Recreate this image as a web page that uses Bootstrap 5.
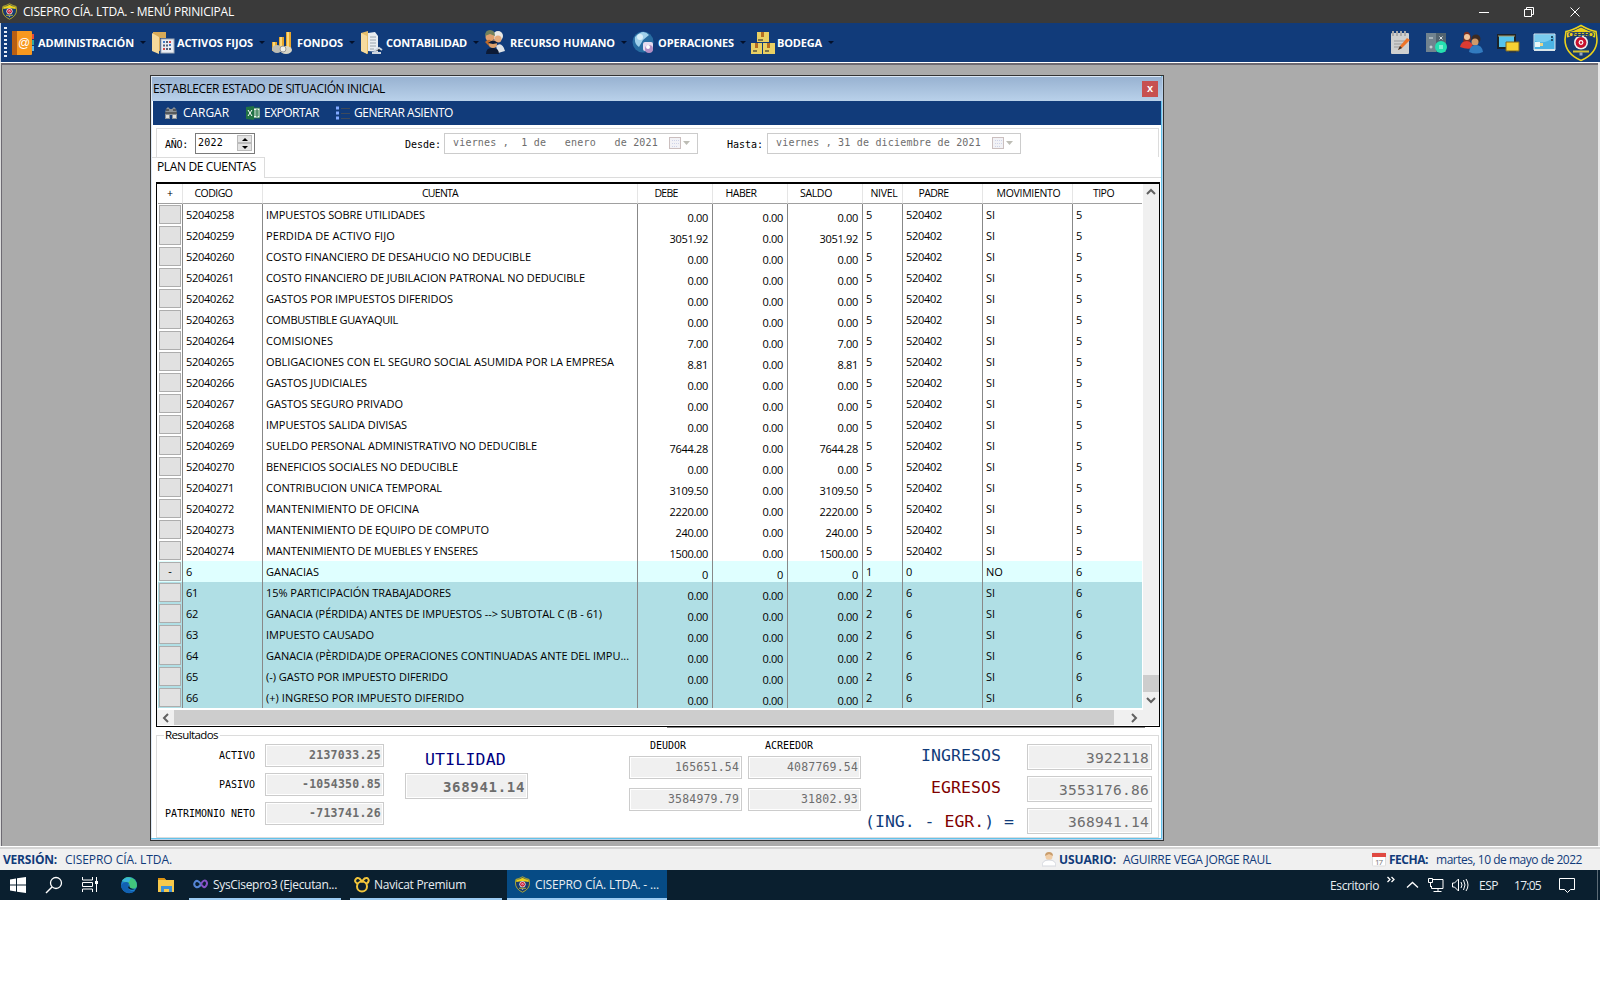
<!DOCTYPE html>
<html lang="es">
<head>
<meta charset="utf-8">
<title>CISEPRO CÍA. LTDA.</title>
<link rel="stylesheet" href="https://cdn.jsdelivr.net/npm/bootstrap@5.3.0/dist/css/bootstrap.min.css">
<style>
body{width:1600px;height:988px;background:#fff;color:#000;font:12px/16px "Open Sans","Noto Sans",sans-serif;overflow:hidden;white-space:nowrap}
svg{display:block;flex:none}
.fit{display:inline-block;white-space:pre}
.mono{font-family:"DejaVu Sans Mono",monospace}
.topbar{height:23px;background:#3a3a3a;color:#fff;padding-left:2px}
.topbar .wtitle{margin-left:6px}
.menubar{height:39px;background:#113b7a;color:#fff;font-weight:700;font-size:11px;padding-left:3px;border-left:1px solid #cdd6e4}
.grip{width:3px;height:31px;margin-right:5px;background:repeating-linear-gradient(#e8edf5 0 2px,transparent 2px 4px)}
.mitem .ico{width:26px}
.mitem .caret{width:0;height:0;border:3px solid transparent;border-top-color:#03102b;border-bottom:0;margin-left:6px}
.tools{margin-left:auto;height:39px}
.mdi{height:784px;background:#ababab;border-top:1px solid #fff;border-left:1px solid #ddd;border-right:2px solid #e6e6e6;box-shadow:inset 1px 2px 0 #6d6a72;padding:12px 0 0 149px}
.child{width:1014px;height:766px;border:1px solid #333;padding:1px 0 2px 1px;background:#fff;box-shadow:inset -1px -1px 0 #b9d1ea,inset -2px -2px 0 #63c3ea,inset 1px 1px 0 #dce8f6}
.ctitle{height:24px;width:1010px;background:linear-gradient(#98b2d1,#b9d1ea);padding-left:1px}
.closex{width:16px;height:16px;background:#c75050;color:#fff;font:bold 11px/14px "Liberation Sans",sans-serif;text-align:center;margin-left:auto;margin-right:4px}
.ctools{height:24px;width:1008px;margin-left:1px;background:#113b7a;color:#fff;padding-left:11px}
.filters{height:29px;margin:3px 4px 0 4px;border:1px solid #dcdcdc;border-bottom:0;padding-left:8px;font-size:10px;width:1003px}
.filters > .fit{padding-top:3px}
.tabs{height:21px;width:1009px}
.tabs .ctab{width:113px;border-top:1px solid #dcdcdc;border-right:1px solid #dcdcdc;padding:1px 0 0 5px}
.tabs .rest{border-bottom:1px solid #dcdcdc}
.spin{width:60px;height:21px;border:1px solid #7a7a7a;padding:0 2px 0 2px;margin-left:7px}
.spin i{display:block;width:15px;height:8px;background:#e3e3e3;border:1px solid #bbb;position:relative}
.spin i::after{content:"";position:absolute;left:4px;top:2px;border:3px solid transparent;border-bottom:3px solid #000;border-top:0}
.spin i+i::after{border-top:3px solid #000;border-bottom:0}
.dpick{height:21px;width:254px;border:1px solid #ccc;color:#6d6d6d;padding:0 6px 1px 8px;margin-left:3px}
.gridbox{margin:4px 0 0 4px;width:1004px;height:545px;border:1px solid #000;border-top-width:2px}
.ledger{width:984px;table-layout:fixed;border-collapse:separate;border-spacing:0;margin-left:1px;font-size:11px;line-height:14px}
.ledger th{height:20px;font-weight:400;text-align:center;padding:0;border-right:1px solid #e5e5e5;border-bottom:1px solid #a0a0a0;font-size:10.5px;line-height:13px}
.ledger td{height:21px;padding:0 3px;border-right:1px solid #888;vertical-align:middle}
.ledger th:last-child,.ledger td:last-child{border-right:0}
.ledger td:first-child{padding:0 1px}
.ledger td.num{text-align:right;padding:6px 4px 0 0;letter-spacing:-.3px}
.ledger tr.lead-row{background:#dfffff}
.ledger tr.sub-row{background:#b0dfe5}
.hbtn{width:22px;height:19px;background:#e1e1e1;border:1px solid #adadad;text-align:center;line-height:16px}
.vscroll{width:16px;background:#f0f0f0;height:526px}
.hscroll{height:15px;background:#f0f0f0}
.underline-bar{width:478px;height:1px;background:#888;margin-left:515px}
.results{width:1003px;height:103px;margin:7px 0 0 4px;border:1px solid #dcdcdc}
.results .cap{background:#fff;height:12px;line-height:12px;margin:-7px 0 0 7px;width:56px;padding-left:1px;font-size:11.5px}
.val{background:#f0f0f0;border:1px solid #ccc;box-shadow:inset 0 0 0 1px #fff;color:#6d6d6d;text-align:right;height:23px;padding:2px 2px 0 0;font-family:"DejaVu Sans Mono",monospace;font-size:11.5px;line-height:17px}
.val.big{height:26px;font-size:14.5px;line-height:22px}
.lab{font-family:"DejaVu Sans Mono",monospace;font-size:10px;text-align:right;padding-right:1px}
.head{font-family:"DejaVu Sans Mono",monospace;font-size:16.5px;line-height:20px;color:#113b7a;text-align:right}
.status{height:24px;background:#f0f0f0;color:#113b7a;border-top:1px solid #fff;box-shadow:inset 0 2px 0 #d4d4d4;padding:2px 18px 0 3px}
.taskbar{height:30px;background:#0a1f2f;color:#e9eef2}
.taskbar .fit{padding-top:1px}
.app{width:152px;height:30px;border-bottom:2px solid #9ccbf2;padding-left:4px}
</style>
</head>
<body>
<svg width="0" height="0" class="position-absolute">
<defs>
<symbol id="shield" viewBox="0 0 34 37">
<path d="M2 7Q8 6 17 1Q26 6 32 7L33 15Q33 29 17 36Q1 29 1 15Z" fill="#173a6e" stroke="#ecd21a" stroke-width="1.6"/>
<path d="M3 8Q10 7 17 3Q24 7 31 8L31 13Q17 9 3 13Z" fill="#ecd21a"/>
<circle cx="17" cy="18" r="7" fill="#eee"/><circle cx="17" cy="18" r="5.400" fill="#c8102e"/><circle cx="17" cy="18" r="2.400" fill="#fff"/><circle cx="17" cy="18" r="1.200" fill="#c8102e"/>
<path d="M9 27H25" stroke="#d2c130" stroke-width="2"/><rect x="15.500" y="28" width="3" height="3" fill="#9aa8bd"/>
</symbol>
</defs></svg>

<header class="topbar d-flex align-items-center">
<svg width="15" height="17"><use href="#shield" width="15" height="17"/></svg>
<span class="fit wtitle" data-w="211">CISEPRO CÍA. LTDA. - MENÚ PRINICIPAL</span>
<svg class="ms-auto" width="121" height="20" viewBox="0 0 121 20" fill="none" stroke="#fff"><path d="M0 10.500H10M45.500 7.500H52.500V14.500H45.500ZM47.500 7V5.500H54.500V12.500H53M91.500 5.500L100.500 14.500M100.500 5.500L91.500 14.500"/></svg>
</header>

<nav class="menubar d-flex align-items-center">
<span class="grip"></span>
<div class="mitem d-flex align-items-center" style="width:139px"><span class="ico"><svg width="22" height="24"><rect width="20" height="24" rx="1" fill="#f7981f"/><rect width="5" height="24" fill="#b95f13"/><path d="M20 3h2v5h-2z" fill="#e54b3c"/><path d="M20 9h2v5h-2z" fill="#33a9a0"/><path d="M20 15h2v5h-2z" fill="#59b9e8"/><text x="6" y="16" font-size="12" font-weight="400" fill="#fff" font-family="Liberation Sans">@</text></svg></span><span class="fit" data-w="96">ADMINISTRACIÓN</span><i class="caret"></i></div>
<div class="mitem d-flex align-items-center" style="width:120px"><span class="ico"><svg width="24" height="24"><path d="M2 1H15V7H9V20L2 19Z" fill="#d7aa58"/><path d="M1 2L8 6V23L1 20Z" fill="#f5d99b"/><rect x="10" y="8" width="13" height="14" fill="#e9edf4" stroke="#a3adb9"/><path d="M12 11h2M18 14h2" stroke="#4178c3" stroke-width="2"/><path d="M18 11h2M12 18h2" stroke="#d54748" stroke-width="2"/><path d="M12 14.500h2M15 11h2M15 14.500h2M15 18h2M18 18h2" stroke="#535e74" stroke-width="2"/></svg></span><span class="fit" data-w="76">ACTIVOS FIJOS</span><i class="caret"></i></div>
<div class="mitem d-flex align-items-center" style="width:89px"><span class="ico"><svg width="22" height="24"><path d="M1 11h5v9H1zM8 6h5v13H8zM15 1h5v18h-5z" fill="#e8a72c"/><path d="M2 11h2v9H2zM9 6h2v12H9zM16 1h2v18h-2z" fill="#fbd97a"/><ellipse cx="6" cy="18" rx="5" ry="4" fill="#bdbdb4"/><ellipse cx="15" cy="19" rx="6" ry="4" fill="#d8d6c7"/><circle cx="12" cy="18" r="3" fill="#f0f0e8" stroke="#999"/></svg></span><span class="fit" data-w="46">FONDOS</span><i class="caret"></i></div>
<div class="mitem d-flex align-items-center" style="width:124px"><span class="ico"><svg width="24" height="24"><path d="M1 2L8 0V23L1 20Z" fill="#e7bf6b"/><path d="M8 2L15 1L18 5V21L8 20Z" fill="#e9edf0"/><path d="M10 6h6M10 9h6M10 12h6M10 15h6M10 18h4" stroke="#9aa4ad"/><path d="M1 2L7 5V23L1 20Z" fill="#f6db9e"/><path d="M14 20l5-3 3 2M12 22h9" stroke="#cfd6df" stroke-width="2"/></svg></span><span class="fit" data-w="81">CONTABILIDAD</span><i class="caret"></i></div>
<div class="mitem d-flex align-items-center" style="width:148px"><span class="ico"><svg width="23" height="25"><circle cx="14" cy="6" r="5" fill="#e9e9e6"/><circle cx="14" cy="9" r="3.500" fill="#e5ab7d"/><path d="M12 16q6-5 9 5l-7 2z" fill="#dfe3e8"/><circle cx="6" cy="7" r="4.500" fill="#dfa06e"/><path d="M1 6q0-6 5-6t5 6L6 4Z" fill="#71805b"/><path d="M1 12q5-5 8 1l-3 4z" fill="#be6a2b"/><circle cx="9" cy="14" r="4" fill="#dca06b"/><path d="M4 13q5-5 10 0l-5 1zM2 24q0-7 7-6 6 0 6 6z" fill="#0c1a36"/></svg></span><span class="fit" data-w="105">RECURSO HUMANO</span><i class="caret"></i></div>
<div class="mitem d-flex align-items-center" style="width:119px"><span class="ico"><svg width="23" height="24"><circle cx="11" cy="11" r="10.500" fill="#286da2"/><path d="M3 6q8-9 14-2l-6 5-4 7q-5-3-4-10z" fill="#9fd0ea"/><circle cx="8" cy="6" r="3" fill="#d8eff9"/><rect x="11" y="11" width="10" height="9" rx="2" fill="#e7dcef"/><circle cx="17" cy="18" r="4" fill="#b58fc4"/><circle cx="16" cy="16" r="2" fill="#fff"/></svg></span><span class="fit" data-w="76">OPERACIONES</span><i class="caret"></i></div>
<div class="mitem d-flex align-items-center"><span class="ico"><svg width="24" height="24"><path d="M6 1h12v10H6zM0 12h11v11H0zM12 12h12v11H12z" fill="#ead063"/><path d="M10 1h3v5h-3zM4 12h3v5H4zM16 12h3v5h-3z" fill="#b66e21"/><path d="M7 9h5M2 20h4M14 20h4" stroke="#7e7548" stroke-width="2"/></svg></span><span class="fit" data-w="45">BODEGA</span><i class="caret"></i></div>
<div class="tools d-flex align-items-center">
<svg width="22" height="26" style="margin-right:14px"><rect x="1" y="3" width="18" height="21" rx="1" fill="#cfd0d0"/><path d="M3 1v5M7 1v5M11 1v5M15 1v5" stroke="#aaa" stroke-width="2"/><path d="M4 11h12M4 14h9M4 17h6" stroke="#999"/><path d="M8 20l2-4L17 8l3 2-8 8z" fill="#ed7428"/><path d="M8 20l2-4 2 2z" fill="#333"/></svg>
<svg width="21" height="24" style="margin-right:13px"><path d="M0 2h10v19H0z" fill="#71838f"/><path d="M10 2h10v19H10z" fill="#52636f"/><path d="M3 7h4M5 14.500v3M3.500 16h3M13.500 5.500l3 3M16.500 5.500l-3 3" stroke="#dfe6ea"/><circle cx="15" cy="16" r="6" fill="#25dfb1"/><path d="M13 15h4M13 17h4" stroke="#d8fff3"/></svg>
<svg width="24" height="24" style="margin-right:13px"><path d="M4 2q6-4 7 6l-2 5H3z" fill="#7b3022"/><circle cx="7" cy="6" r="3" fill="#f3c59d"/><path d="M0 16q1-6 7-6 6 1 6 7-6 2-13-1z" fill="#dc3b32"/><circle cx="16" cy="8" r="4.500" fill="#3b2a22"/><circle cx="15" cy="11" r="3.500" fill="#d19a6a"/><path d="M9 21q1-7 7-7t7 7q-7 3-14 0z" fill="#327bc0"/></svg>
<svg width="23" height="24" style="margin-right:13px"><path d="M1 4h17v13H1z" fill="#55c4ed" stroke="#1c2329" stroke-width="2"/><path d="M1 5h17" stroke="#aa9b67"/><path d="M9 11h13v9H9z" fill="#f6d233" stroke="#7a6422"/><path d="M12 21h7" stroke="#333"/></svg>
<svg width="23" height="22" style="margin-right:8px"><path d="M1 2h21v16H1z" fill="#4ab2e4" stroke="#dce8f0"/><path d="M2 9Q12 13 21 5V3H2Z" fill="#79cbef"/><rect x="2" y="10" width="5" height="5" fill="#eaf7f7"/><path d="M7 11h3v3H7z" fill="#e9d68c"/><path d="M18 5h2M18 8h2" stroke="#244e6b" stroke-width="2"/><path d="M1 18h21" stroke="#dae5e9" stroke-width="2"/></svg>
<svg width="34" height="38" style="margin-right:2px"><use href="#shield" width="34" height="38"/><text x="4" y="13" font-family="Liberation Sans" font-size="8" font-weight="700" fill="#173a6e" textLength="26">CISEPRO</text></svg>
</div>
</nav>

<main class="mdi">
<section class="child">
<div class="ctitle d-flex align-items-center"><span class="fit" data-w="232">ESTABLECER ESTADO DE SITUACIÓN INICIAL</span><span class="closex">x</span></div>
<div class="ctools d-flex align-items-center">
<svg width="14" height="14"><path d="M2 3l2-2 2 2h2l2-2 2 2 1 4v6H8V9H6v4H1V7z" fill="#8b9196"/><path d="M2 4h3M9 4h3M1 7h12" stroke="#222"/><path d="M2 9h3v3H2zM9 9h3v3H9z" fill="#dcdcdc"/></svg>
<span class="fit" data-w="46" style="margin-left:5px">CARGAR</span>
<svg width="14" height="14" style="margin-left:17px"><path d="M7 2h7v10H7z" fill="#eef5ef" stroke="#207245"/><path d="M8 5h5M8 7h5M8 9h5M11 3v8" stroke="#207245"/><path d="M0 1l8-1v14l-8-1z" fill="#207245"/><path d="M2 4l4 6M6 4l-4 6" stroke="#fff"/></svg>
<span class="fit" data-w="55" style="margin-left:4px">EXPORTAR</span>
<svg width="14" height="14" style="margin-left:17px"><path d="M0 2h3M0 7h3M0 12h3" stroke="#82aaff" stroke-width="3"/><path d="M5 2.500h9M5 7.500h9M5 12.500h9" stroke="#3e4a5c"/></svg>
<span class="fit" data-w="99" style="margin-left:4px">GENERAR ASIENTO</span>
</div>
<div class="filters d-flex align-items-center mono">
<span class="fit" data-w="23">AÑO:</span>
<span class="spin d-flex align-items-center justify-content-between"><span class="fit" data-w="25">2022</span><span><i></i><i></i></span></span>
<span class="fit" data-w="36" style="margin-left:150px">Desde:</span>
<span class="dpick d-flex align-items-center"><span class="fit" data-w="205">viernes ,  1 de   enero   de 2021</span><svg class="ms-auto" width="22" height="14"><rect x=".5" y="1.500" width="11" height="11" fill="#f2f2f6" stroke="#cbbfbf"/><path d="M3 4.500h7M3 7.500h7M3 10.500h5" stroke="#cfd4e8" stroke-dasharray="1 1"/><path d="M14 5h7l-3.500 4z" fill="#bdbdb5"/></svg></span>
<span class="fit" data-w="36" style="margin-left:29px">Hasta:</span>
<span class="dpick d-flex align-items-center" style="margin-left:4px"><span class="fit" data-w="205">viernes , 31 de diciembre de 2021</span><svg class="ms-auto" width="22" height="14"><rect x=".5" y="1.500" width="11" height="11" fill="#f2f2f6" stroke="#cbbfbf"/><path d="M3 4.500h7M3 7.500h7M3 10.500h5" stroke="#cfd4e8" stroke-dasharray="1 1"/><path d="M14 5h7l-3.500 4z" fill="#bdbdb5"/></svg></span>
</div>
<div class="tabs d-flex"><div class="ctab"><span class="fit" data-w="99">PLAN DE CUENTAS</span></div><div class="rest flex-fill"></div></div>
<div class="gridbox">
<div class="d-flex align-items-start">
<table class="ledger">
<colgroup><col style="width:25px"><col style="width:80px"><col style="width:375px"><col style="width:75px"><col style="width:75px"><col style="width:75px"><col style="width:40px"><col style="width:80px"><col style="width:90px"><col style="width:69px"></colgroup>
<thead><tr><th>+</th><th><span class="fit" data-w="38" style="margin-right:18px">CODIGO</span></th><th><span class="fit" data-w="36" style="margin-right:20px">CUENTA</span></th><th><span class="fit" data-w="23" style="margin-right:18px">DEBE</span></th><th><span class="fit" data-w="31" style="margin-right:18px">HABER</span></th><th><span class="fit" data-w="32" style="margin-right:18px">SALDO</span></th><th><span class="fit" data-w="27" style="margin-left:3px">NIVEL</span></th><th><span class="fit" data-w="30" style="margin-right:18px">PADRE</span></th><th><span class="fit" data-w="64" style="margin-left:2px">MOVIMIENTO</span></th><th><span class="fit" data-w="21" style="margin-right:8px">TIPO</span></th></tr></thead>
<tbody id="rows"></tbody>
</table>
<div class="vscroll ms-auto"><svg width="16" height="526"><path d="M4 10l4-4 4 4M4 514l4 4 4-4" fill="none" stroke="#606060" stroke-width="2"/><rect y="491" width="16" height="17" fill="#cdcdcd"/></svg></div>
</div>
<div class="hscroll"><svg width="1002" height="15"><rect x="17" width="940" height="15" fill="#cdcdcd"/><path d="M11 4l-4 4 4 4M975 4l4 4-4 4" fill="none" stroke="#606060" stroke-width="2"/></svg></div>
</div>
<div class="underline-bar"></div>
<div class="results">
<div class="cap"><span class="fit" data-w="53">Resultados</span></div>
<div class="d-flex align-items-start">
<div class="d-grid" style="grid-template-columns:99px 119px;column-gap:9px;row-gap:6px;margin:3px 0 0 0">
<div class="lab pt-1"><span class="fit" data-w="36">ACTIVO</span></div><div class="val fw-bold"><span class="fit" data-w="72">2137033.25</span></div>
<div class="lab pt-1"><span class="fit" data-w="36">PASIVO</span></div><div class="val fw-bold"><span class="fit" data-w="79">-1054350.85</span></div>
<div class="lab pt-1"><span class="fit" data-w="90">PATRIMONIO NETO</span></div><div class="val fw-bold"><span class="fit" data-w="72">-713741.26</span></div>
</div>
<div style="margin:8px 0 0 21px;width:123px"><div class="head" style="color:#000080;padding-right:22px;height:24px;padding-top:1px"><span class="fit" data-w="81">UTILIDAD</span></div><div class="val big fw-bold" style="font-size:14px"><span class="fit" data-w="82">368941.14</span></div></div>
<div class="d-grid" style="grid-template-columns:113px 113px;column-gap:6px;margin:-3px 0 0 101px">
<div class="lab" style="text-align:left;padding-left:21px;height:18px"><span class="fit" data-w="36">DEUDOR</span></div><div class="lab" style="text-align:left;padding-left:17px"><span class="fit" data-w="48">ACREEDOR</span></div>
<div class="val"><span class="fit" data-w="64">165651.54</span></div><div class="val"><span class="fit" data-w="71">4087769.54</span></div>
<div class="val" style="margin-top:9px"><span class="fit" data-w="71">3584979.79</span></div><div class="val" style="margin-top:9px"><span class="fit" data-w="57">31802.93</span></div>
</div>
<div class="d-grid" style="grid-template-columns:153px 125px;column-gap:13px;row-gap:6px;margin:3px 0 0 0">
<div class="head" style="padding:2px 13px 0 0"><span class="fit" data-w="80">INGRESOS</span></div><div class="val big"><span class="fit" data-w="63">3922118</span></div>
<div class="head" style="padding:2px 13px 0 0;color:#800000"><span class="fit" data-w="70">EGRESOS</span></div><div class="val big"><span class="fit" data-w="90">3553176.86</span></div>
<div class="head" style="padding-top:4px"><span class="fit" data-w="149">(ING. - <span style="color:#800000">EGR.</span>) =</span></div><div class="val big"><span class="fit" data-w="81">368941.14</span></div>
</div>
</div>
</div>
</section>
</main>

<footer>
<div class="status d-flex align-items-center">
<b class="fit" data-w="54">VERSIÓN:</b><span class="fit" data-w="107" style="margin-left:8px">CISEPRO CÍA. LTDA.</span>
<svg class="ms-auto" width="14" height="15"><circle cx="7" cy="4.500" r="3.500" fill="#f0cda6"/><path d="M3 4q0-4 4-4t4 4L7 2z" fill="#c99d6c"/><path d="M0 14q0-6 7-6t7 6z" fill="#fff" stroke="#d5d8de"/></svg>
<b class="fit" data-w="57" style="margin-left:3px">USUARIO:</b><span class="fit" data-w="148" style="margin-left:7px">AGUIRRE VEGA JORGE RAUL</span>
<svg width="14" height="15" style="margin-left:101px"><rect x=".5" y="1" width="13" height="13" rx="1" fill="#fff" stroke="#ddd"/><path d="M0 1h14v4H0z" fill="#e04a42"/><text x="3" y="13" font-size="8" fill="#777" textLength="8">17</text></svg>
<b class="fit" data-w="39" style="margin-left:3px">FECHA:</b><span class="fit" data-w="146" style="margin-left:8px">martes, 10 de mayo de 2022</span>
</div>
<div class="taskbar d-flex align-items-center">
<svg width="189" height="30" fill="none">
<path d="M10 9.500l6-1v6h-6zM17 8.300l9-1.300v7.500h-9zM10 15.500h6v6l-6-1zM17 15.500h9V23l-9-1.200z" fill="#fff"/>
<circle cx="56" cy="13" r="5.500" stroke="#fff" stroke-width="1.300"/><path d="M52 17l-6 6" stroke="#fff" stroke-width="1.500"/>
<path d="M82.500 7v3h10V7M82.500 22v-3h10v3M82.500 12.500h10v4h-10zM96.500 7v15" stroke="#fff"/><path d="M95 11h3v3h-3z" fill="#fff"/>
<circle cx="129" cy="15" r="8" fill="#1c80d2"/><path d="M122 11q4-6 10-3 5 2 5 8-1 4-8 2 2-3-1-5-3-1-6-2z" fill="#42c67c"/><path d="M122 11q4-5 9-3l-2 4q-4 0-7-1z" fill="#39b5dd"/><path d="M121 15q4-5 8-2-3 5 2 8l4 0q-5 4-10 1-4-3-4-7z" fill="#1261b2"/><path d="M129 15q0 4 6 4-4 2-7-1z" fill="#0a1f2f"/>
<path d="M158 8h6l2 2h8v12h-16z" fill="#f7c94b"/><path d="M158 8h6l2 2h-8z" fill="#de9310"/><path d="M161 22v-6h11v6h-3v-3h-5v3z" fill="#3c91d8"/>
</svg>
<div class="app d-flex align-items-center"><svg width="15" height="10" fill="none" stroke-width="2"><path d="M8 5Q4 0 2 3t1 5q3 1 5-3" stroke="#5585d6"/><path d="M8 5q3-5 5-3t0 5-5-2" stroke="#8752c6"/></svg><span class="fit" data-w="124" style="margin-left:5px">SysCisepro3 (Ejecutan...</span></div>
<div class="app d-flex align-items-center" style="margin-left:9px"><svg width="16" height="17" fill="none" stroke="#f2c53b" stroke-width="2"><circle cx="8" cy="10.500" r="5"/><path d="M4 8Q0 6 1.500 3.500t4-1L8 5.500l2.500-3q3-1.500 4 1T12 8"/></svg><span class="fit" data-w="92" style="margin-left:4px">Navicat Premium</span></div>
<div class="app d-flex align-items-center" style="width:160px;margin-left:5px;padding-left:8px;background:#064b85"><svg width="15" height="17"><use href="#shield" width="15" height="17"/></svg><span class="fit" data-w="124" style="margin-left:5px">CISEPRO CÍA. LTDA. - ...</span></div>
<div class="ms-auto d-flex align-items-center" style="width:270px">
<span class="fit" data-w="49">Escritorio</span>
<svg width="93" height="30" fill="none" stroke="#fff"><path d="M8.500 7l2.500 2.500-2.500 2.500M12.500 7l2.500 2.500-2.500 2.500" stroke-width="1.300"/><path d="M28 17.500l5.500-5 5.500 5" stroke-width="1.300"/><path d="M54 9.500h10v9H52.500V16M59 18v3M54.500 21.500h8M49.500 8.500h4v4h-4zM51.500 13v4"/><path d="M73.500 13v4h2l4 4V9l-4 4zM82 12q2 3 0 6M84.500 10q3 5 0 10M87 9q4 6 0 12"/></svg>
<span class="fit" data-w="19" style="margin-left:7px">ESP</span><span class="fit" data-w="27" style="margin-left:16px">17:05</span>
<svg width="20" height="20" style="margin-left:16px" fill="none" stroke="#fff"><path d="M2.500 3.500h15v11h-4l-3 3-3-3h-5z"/></svg>
<span style="width:1px;height:30px;background:#5c6b76;margin-left:20px"></span>
</div>
</div>
</footer>
<script src="https://cdn.jsdelivr.net/npm/bootstrap@5.3.0/dist/js/bootstrap.bundle.min.js"></script>
<script>
// code, account, drawn width of the account name, debit (credit is always zero)
const accounts = [
["52040258","IMPUESTOS SOBRE UTILIDADES",159,"0.00"],
["52040259","PERDIDA DE ACTIVO FIJO",129,"3051.92"],
["52040260","COSTO FINANCIERO DE DESAHUCIO NO DEDUCIBLE",265,"0.00"],
["52040261","COSTO FINANCIERO DE JUBILACION PATRONAL NO DEDUCIBLE",319,"0.00"],
["52040262","GASTOS POR IMPUESTOS DIFERIDOS",187,"0.00"],
["52040263","COMBUSTIBLE GUAYAQUIL",132,"0.00"],
["52040264","COMISIONES",67,"7.00"],
["52040265","OBLIGACIONES CON EL SEGURO SOCIAL ASUMIDA POR LA EMPRESA",348,"8.81"],
["52040266","GASTOS JUDICIALES",101,"0.00"],
["52040267","GASTOS SEGURO PRIVADO",137,"0.00"],
["52040268","IMPUESTOS SALIDA DIVISAS",141,"0.00"],
["52040269","SUELDO PERSONAL ADMINISTRATIVO NO DEDUCIBLE",271,"7644.28"],
["52040270","BENEFICIOS SOCIALES NO DEDUCIBLE",192,"0.00"],
["52040271","CONTRIBUCION UNICA TEMPORAL",176,"3109.50"],
["52040272","MANTENIMIENTO DE OFICINA",153,"2220.00"],
["52040273","MANTENIMIENTO DE EQUIPO DE COMPUTO",223,"240.00"],
["52040274","MANTENIMIENTO DE MUEBLES Y ENSERES",212,"1500.00"],
["6","GANACIAS",53,"0"],
["61","15% PARTICIPACIÓN TRABAJADORES",185,"0.00"],
["62","GANACIA (PÉRDIDA) ANTES DE IMPUESTOS --> SUBTOTAL C (B - 61)",336,"0.00"],
["63","IMPUESTO CAUSADO",108,"0.00"],
["64","GANACIA (PÈRDIDA)DE OPERACIONES CONTINUADAS ANTE DEL IMPU...",363,"0.00"],
["65","(-) GASTO POR IMPUESTO DIFERIDO",182,"0.00"],
["66","(+) INGRESO POR IMPUESTO DIFERIDO",198,"0.00"]];
document.getElementById("rows").innerHTML = accounts.map(([code, name, w, debit]) => {
  const kind = code.length === 8 ? 0 : code.length === 1 ? 1 : 2;
  const [level, parent, moves, type] = [["5","520402","SI","5"],["1","0","NO","6"],["2","6","SI","6"]][kind];
  const fit = (t, n) => `<span class="fit" data-w="${n}">${t}</span>`;
  return `<tr class="${["","lead-row","sub-row"][kind]}"><td><div class="hbtn">${kind === 1 ? "-" : ""}</div></td><td>${fit(code, code.length * 6)}</td><td>${fit(name.replace(">", "&gt;"), w)}</td><td class="num">${debit}</td><td class="num">${kind === 1 ? "0" : "0.00"}</td><td class="num">${debit}</td><td>${level}</td><td>${fit(parent, parent.length * 6)}</td><td>${moves}</td><td>${type}</td></tr>`;
}).join("");
document.querySelectorAll(".fit").forEach(el => {
  const w = el.getBoundingClientRect().width, n = el.textContent.length;
  el.style.letterSpacing = ((el.dataset.w - w) / n) + "px";
});
</script>
</body>
</html>
